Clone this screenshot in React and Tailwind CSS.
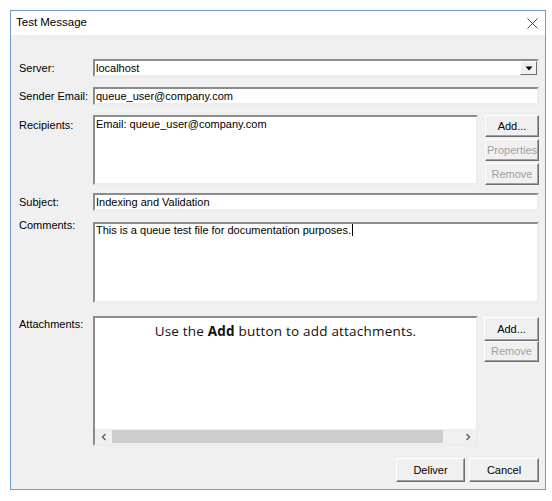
import { useState } from 'react';

const sunken = 'bg-white border-2 border-t-[#8c8c8c] border-l-[#8c8c8c] border-b-[#ececec] border-r-[#ececec]';
const raised =
  'bg-[#f0f0f0] border border-t-white border-l-white border-b-[#6e6e6e] border-r-[#6e6e6e] shadow-[inset_-1px_-1px_0_#a0a0a0] flex items-center justify-center';

function Btn({ children, disabled, className = '' }) {
  return (
    <button
      type="button"
      className={`${raised} ${disabled ? 'text-[#a0a0a0]' : 'text-black'} leading-[13px] ${className}`}
    >
      {children}
    </button>
  );
}

function Label({ children, className = '' }) {
  return <div className={`w-[74px] shrink-0 leading-[13px] text-black ${className}`}>{children}</div>;
}

function Chevron({ dir }) {
  return (
    <svg width="6" height="8" viewBox="0 0 6 8" className="text-[#606060]">
      {dir === 'left' ? (
        <path d="M4.5 1 L1.5 4 L4.5 7" fill="none" stroke="currentColor" strokeWidth="1.4" />
      ) : (
        <path d="M1.5 1 L4.5 4 L1.5 7" fill="none" stroke="currentColor" strokeWidth="1.4" />
      )}
    </svg>
  );
}

export default function App() {
  const [server] = useState('localhost');

  return (
    <div className="w-[552px] h-[501px] bg-white pt-[10px] pl-[10px] font-['Liberation_Sans',Arial,sans-serif] text-[11px]">
      <div className="w-[536px] h-[480px] border border-[#6b9be0] flex flex-col">
        {/* title bar */}
        <div className="h-[24px] bg-white flex items-center justify-between pl-[5px] pr-[7px] shrink-0">
          <span className="text-[11.5px] text-black">Test Message</span>
          <svg width="11" height="11" viewBox="0 0 11 11">
            <path d="M0.5 0.5 L10.5 10.5 M10.5 0.5 L0.5 10.5" stroke="#333" strokeWidth="0.9" />
          </svg>
        </div>

        {/* body */}
        <div className="flex-1 bg-[#f0f0f0] pl-[8px] pr-[6px] pt-[24px] flex flex-col">
          {/* Server */}
          <div className="flex items-center h-[18px]">
            <Label>Server:</Label>
            <div className={`${sunken} flex-1 h-[18px] flex items-center justify-between pl-[1px]`}>
              <span className="leading-[13px]">{server}</span>
              <div className={`${raised} w-[17px] h-[14px] shadow-none`}>
                <svg width="8" height="5" viewBox="0 0 8 5">
                  <path d="M0.5 0.5 L7.5 0.5 L4 4.5 Z" fill="#000" />
                </svg>
              </div>
            </div>
          </div>

          {/* Sender Email */}
          <div className="flex items-center h-[18px] mt-[10px]">
            <Label>Sender Email:</Label>
            <div className={`${sunken} flex-1 h-[18px] flex items-center pl-[1px]`}>
              <span className="leading-[13px]">queue_user@company.com</span>
            </div>
          </div>

          {/* Recipients */}
          <div className="flex items-start mt-[10px]">
            <Label className="mt-[4px]">Recipients:</Label>
            <div className={`${sunken} w-[385px] h-[70px] pl-[1px] pt-[1px] leading-[13px]`}>
              Email: queue_user@company.com
            </div>
            <div className="ml-[7px] flex flex-col gap-[2px]">
              <Btn className="w-[54px] h-[22px]">Add...</Btn>
              <Btn disabled className="w-[54px] h-[22px]">Properties</Btn>
              <Btn disabled className="w-[54px] h-[22px]">Remove</Btn>
            </div>
          </div>

          {/* Subject */}
          <div className="flex items-center h-[18px] mt-[8px]">
            <Label>Subject:</Label>
            <div className={`${sunken} flex-1 h-[18px] flex items-center pl-[1px]`}>
              <span className="leading-[13px]">Indexing and Validation</span>
            </div>
          </div>

          {/* Comments */}
          <div className="flex items-start mt-[11px]">
            <Label className="-mt-[3px]">Comments:</Label>
            <div className={`${sunken} flex-1 h-[81px] pl-[1px] leading-[13px]`}>
              This is a queue test file for documentation purposes.
              <span className="inline-block w-px h-[12px] bg-black align-[-2px] ml-[1px]" />
            </div>
          </div>

          {/* Attachments */}
          <div className="flex items-start mt-[13px]">
            <Label className="mt-[2px]">Attachments:</Label>
            <div className={`${sunken} w-[385px] h-[130px] flex flex-col`}>
              <div className="flex-1 pt-[5px] text-center font-['Open_Sans',sans-serif] text-[13.5px] tracking-[0.2px] leading-[17px] text-[#111]">
                Use the <b className="font-bold">Add</b> button to add attachments.
              </div>
              <div className="h-[15px] bg-[#f0f0f0] flex items-center">
                <div className="w-[17px] h-full flex items-center justify-center">
                  <Chevron dir="left" />
                </div>
                <div className="flex-1 h-[13px] bg-[#cdcdcd]" />
                <div className="w-[16px]" />
                <div className="w-[17px] h-full flex items-center justify-center">
                  <Chevron dir="right" />
                </div>
              </div>
            </div>
            <div className="ml-[6px] mt-[1px] flex flex-col">
              <Btn className="w-[55px] h-[24px]">Add...</Btn>
              <Btn disabled className="w-[55px] h-[21px]">Remove</Btn>
            </div>
          </div>

          {/* Footer */}
          <div className="flex justify-end gap-[4px] mt-[12px]">
            <Btn className="w-[69px] h-[24px]">Deliver</Btn>
            <Btn className="w-[70px] h-[24px]">Cancel</Btn>
          </div>
        </div>
      </div>
    </div>
  );
}
